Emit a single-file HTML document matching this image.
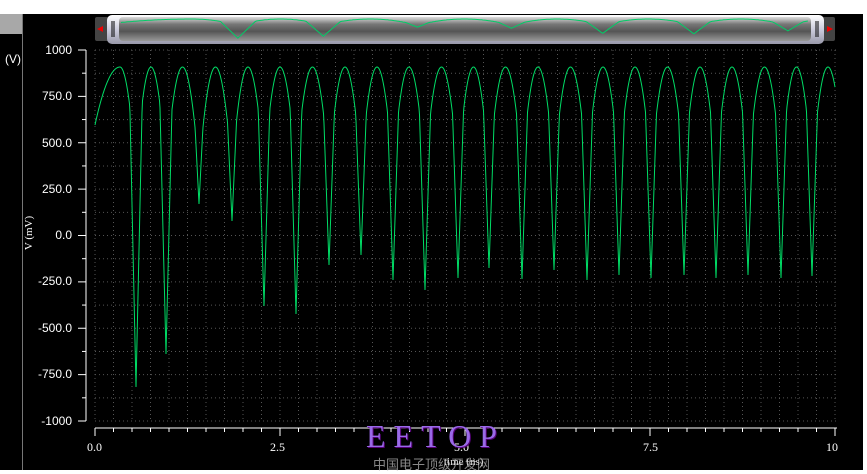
<!DOCTYPE html>
<html><head><meta charset="utf-8"><style>
body{margin:0;width:867px;height:474px;background:#fff;overflow:hidden;position:relative;font-family:"Liberation Sans",sans-serif}
#main{position:absolute;left:0;top:14px;width:863px;height:456px;background:#000}
#lp{position:absolute;left:0;top:14px;width:22px;height:456px;border-right:1px solid #777;background:#000}
#lpt{position:absolute;left:0;top:14px;width:22px;height:20px;background:#a8a8a8}
.yl{position:absolute;color:#fff;font-size:12px;text-align:right;width:60px;left:12px}
.xl{position:absolute;color:#fff;font-size:12px;font-family:"Liberation Serif",serif}
</style></head><body>
<div id="main"></div><div id="lp"></div><div id="lpt"></div>
<div style="position:absolute;left:5px;top:52px;color:#fff;font-size:12px">(V)</div>
<div style="position:absolute;left:4px;top:227px;color:#fff;font-size:11px;font-family:'Liberation Serif',serif;transform:rotate(-90deg);width:50px;text-align:center">V (mV)</div>
<div class="yl" style="top:43px">1000</div>
<div class="yl" style="top:89px">750.0</div>
<div class="yl" style="top:136px">500.0</div>
<div class="yl" style="top:182px">250.0</div>
<div class="yl" style="top:228px">0.0</div>
<div class="yl" style="top:274px">-250.0</div>
<div class="yl" style="top:321px">-500.0</div>
<div class="yl" style="top:367px">-750.0</div>
<div class="yl" style="top:414px">-1000</div>
<div class="xl" style="left:87px;top:440px">0.0</div>
<div class="xl" style="left:270px;top:440px">2.5</div>
<div class="xl" style="left:454px;top:440px">5.0</div>
<div class="xl" style="left:643px;top:440px">7.5</div>
<div class="xl" style="left:826px;top:440px">10</div>
<svg id="s" width="867" height="474" style="position:absolute;left:0;top:0">
<defs><linearGradient id="g" x1="0" y1="0" x2="0" y2="1"><stop offset="0" stop-color="#ddd"/><stop offset=".3" stop-color="#777"/><stop offset=".6" stop-color="#555"/><stop offset="1" stop-color="#999"/></linearGradient>
<linearGradient id="h" x1="0" y1="0" x2="0" y2="1"><stop offset="0" stop-color="#fff"/><stop offset=".5" stop-color="#ccd"/><stop offset="1" stop-color="#99a"/></linearGradient></defs>
<rect x="95" y="17" width="14" height="24" rx="2" fill="#444"/>
<polygon points="97,29 103,26 103,32" fill="#e00"/>
<rect x="821" y="17" width="14" height="24" rx="2" fill="#444"/>
<polygon points="833,29 827,26 827,32" fill="#e00"/>
<rect x="107" y="15" width="717" height="29" rx="5" fill="url(#h)"/>
<rect x="119" y="17" width="692" height="24" rx="4" fill="url(#g)"/>
<line x1="112" y1="21" x2="112" y2="37" stroke="#000"/><line x1="114" y1="21" x2="114" y2="37" stroke="#000"/>
<line x1="816" y1="21" x2="816" y2="37" stroke="#000"/><line x1="818" y1="21" x2="818" y2="37" stroke="#000"/>
<g id="grid" stroke="#555" stroke-dasharray="1,3"></g>
<g id="ax" stroke="#fff"></g>
<polyline id="mini" fill="none" stroke="#0c6" stroke-width="1"/>
<polyline id="w" fill="none" stroke="#00dd66" stroke-width="1"/>
</svg>
<div style="position:absolute;left:366px;top:418px;color:#9a6ae8;font-family:'Liberation Serif',serif;font-size:32px;letter-spacing:8px;text-shadow:1px 1px 0 #507">EETOP</div>
<div style="position:absolute;left:373px;top:454px;color:#888;font-size:13px;font-family:'Liberation Sans','Noto Sans CJK SC',sans-serif">中国电子顶级开发网</div>
<div style="position:absolute;left:444px;top:456px;color:#ddd;font-size:11px;font-family:'Liberation Serif',serif">time (ns)</div>
<script>
var ns="http://www.w3.org/2000/svg",s=document.getElementById('s');
function L(p,x1,y1,x2,y2){var l=document.createElementNS(ns,'line');l.setAttribute('x1',x1);l.setAttribute('y1',y1);l.setAttribute('x2',x2);l.setAttribute('y2',y2);p.appendChild(l);}
var g=document.getElementById('grid'),a=document.getElementById('ax');
for(var i=0;i<=40;i++){var x=95+i*18.5;L(g,x,50,x,421);L(a,x,428,x,i%10==0?436:432);}
for(var j=0;j<=16;j++){var y=50+j*371/16;L(g,95,y,837,y);L(a,86,y,j%2==0?78:82,y);}
L(a,86,50,86,421);L(a,95,428,837,428);
var c=[104,136,166,199,232,264,296,329,361,393,425,458,489,522,554,587,619,651,684,716,748,781,812,844],
m=[125,387,354,204,221,306,314,265,255,280,290,278,268,279,270,280,275,278,275,278,275,278,276,276];
function Y(x){
 if(x<120){var yy=67+58*Math.pow((120-x)/25,2);var d=c[1]-x;if(d<7)yy=Math.max(yy,m[1]-(m[1]-67)*(d/7));return yy;}
 var k=0;while(k<c.length-1&&c[k+1]<x)k++;
 var c0=c[k],c1=c[k+1],mid=(c0+c1)/2,hp=(c1-c0)/2,u=(x-mid)/hp;
 var y=67+105*u*u;
 var d0=x-c0,d1=c1-x,w=7;
 if(d0<w)y=Math.max(y,m[k]-(m[k]-67)*(d0/w));
 if(d1<w)y=Math.max(y,m[k+1]-(m[k+1]-67)*(d1/w));
 return Math.min(y,Math.max(m[k],m[k+1]));}
var p=[],q=[];for(var x=95;x<=835;x+=0.5){p.push(x+','+Y(x).toFixed(1));}
document.getElementById('w').setAttribute('points',p.join(' '));
for(var x=95;x<=340;x+=0.5){var xx=121+(x-95)*2.85;if(xx>809)break;q.push(xx.toFixed(1)+','+(19+(Y(x)-67)*0.06).toFixed(1));}
document.getElementById('mini').setAttribute('points',q.join(' '));
</script>
</body></html>
